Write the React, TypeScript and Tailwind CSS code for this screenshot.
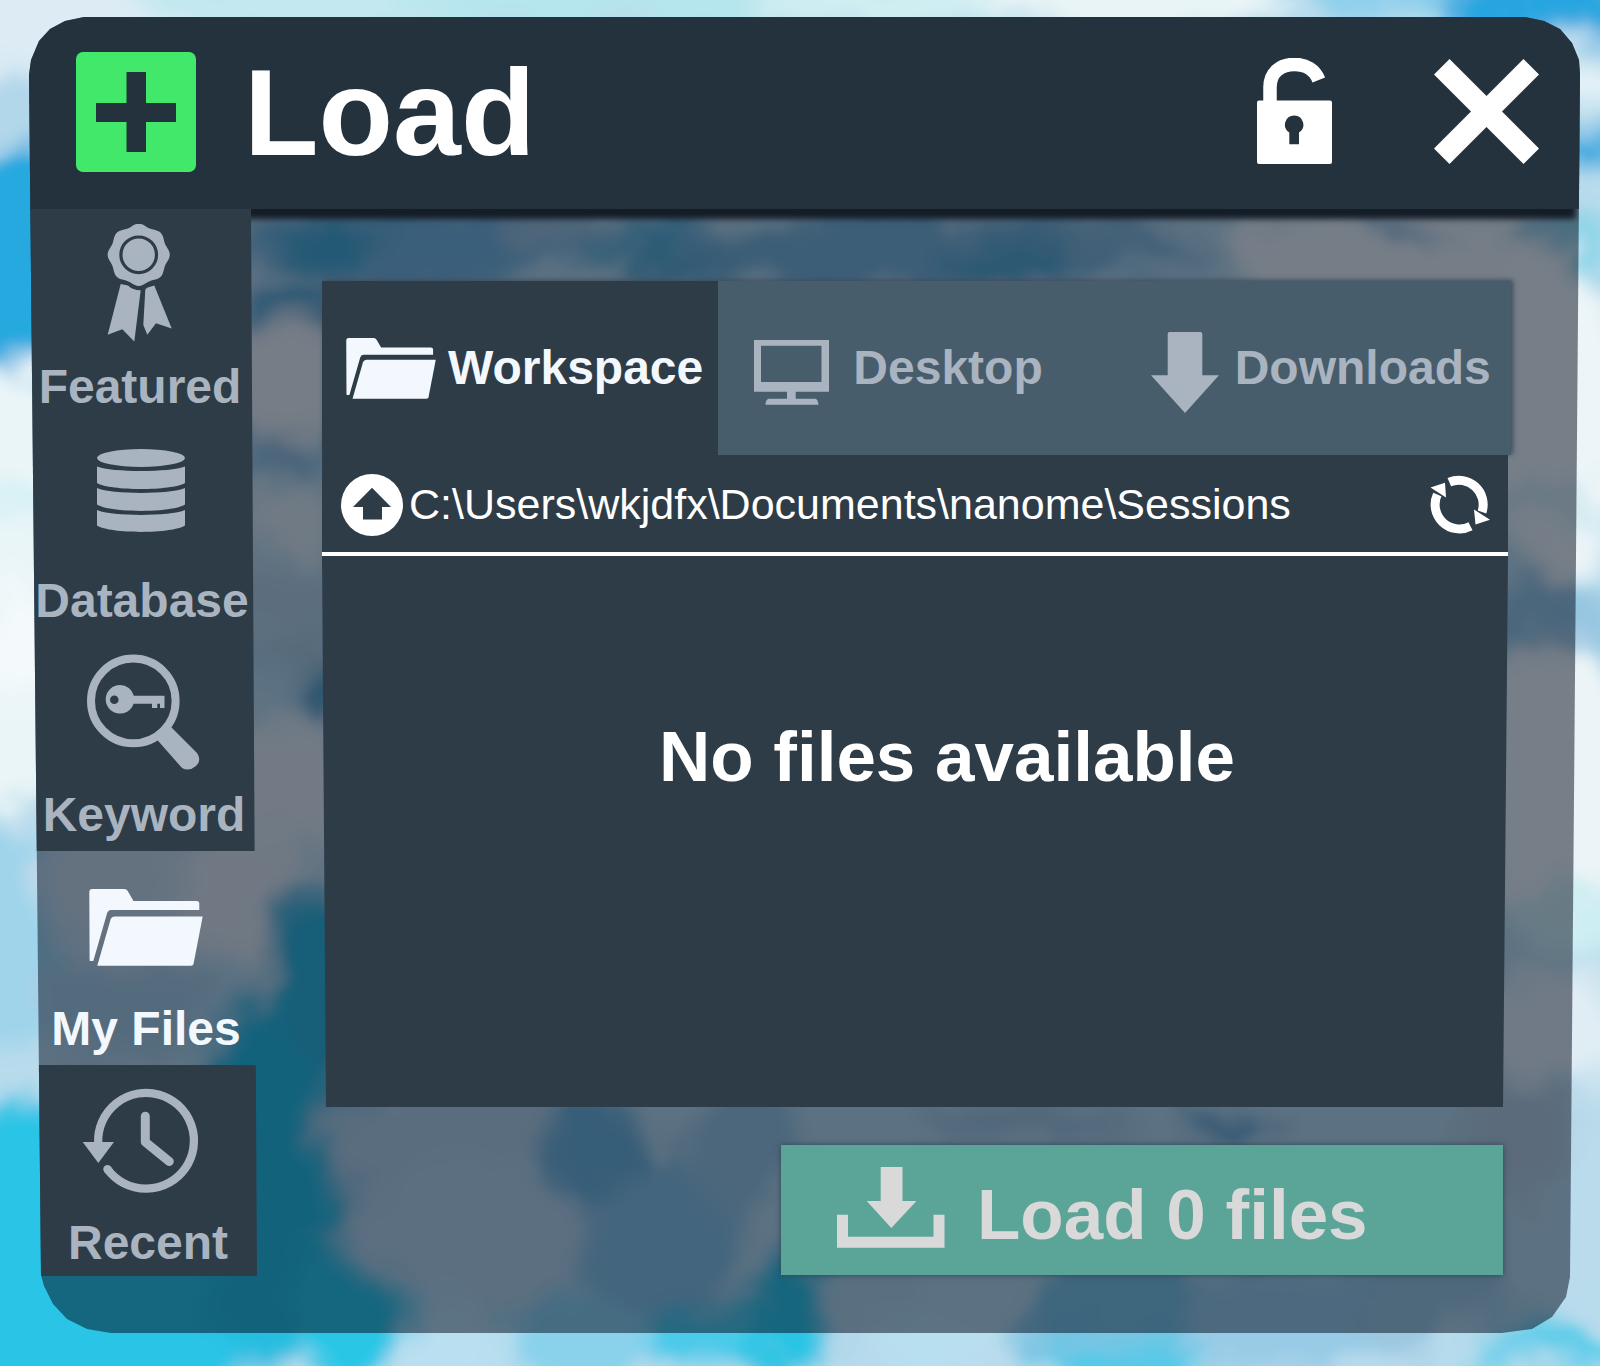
import React, { useState } from "react";

type Blob = [cx: number, cy: number, rx: number, ry: number, fill: string];

const softClouds: Blob[] = [
  // top edge
  [60, 20, 160, 90, "#dcebf4"],
  [330, 0, 200, 40, "#c3e8f0"],
  [600, 0, 200, 30, "#b5e5ed"],
  [900, 0, 150, 30, "#cfeef2"],
  [1150, 0, 170, 40, "#e8f4f6"],
  [1380, -5, 110, 26, "#8fd0ec"],
  [1540, 0, 100, 38, "#27a5e0"],
  [1575, 85, 60, 26, "#e3f2f7"],
  [1595, 150, 30, 22, "#2aa8e0"],
  // left edge
  [0, 270, 130, 118, "#27a9df"],
  [20, 110, 50, 36, "#b2d7ea"],
  [0, 590, 90, 220, "#eaf5f8"],
  [20, 640, 40, 60, "#f4fafb"],
  [20, 500, 40, 18, "#d6f1f4"],
  [0, 940, 90, 110, "#9fd4eb"],
  // behind the glass, upper band
  [420, 240, 190, 44, "#74b6dc"],
  [330, 250, 60, 20, "#3da8d0"],
  [560, 235, 60, 16, "#a8c8dc"],
  [720, 262, 90, 22, "#3aa5c8"],
  [640, 240, 70, 18, "#5fb4d8"],
  [930, 250, 260, 40, "#78b4d6"],
  [1010, 262, 60, 14, "#4aa6cc"],
  [1120, 240, 60, 18, "#8cbcd8"],
  [1400, 250, 180, 60, "#ebf3f6"],
  [1400, 225, 40, 10, "#6ab4d8"],
  [1555, 236, 44, 14, "#7cc6dc"],
  // left gutter
  [290, 310, 60, 26, "#4ca6cf"],
  [290, 380, 70, 60, "#ebf2f5"],
  [290, 452, 50, 10, "#5ea6cf"],
  [285, 520, 50, 40, "#dfecf2"],
  [280, 600, 60, 30, "#b8d4e2"],
  [290, 650, 50, 16, "#aacbdc"],
  [312, 690, 30, 20, "#4a9dc4"],
  [280, 790, 90, 70, "#e2edf2"],
  [150, 890, 110, 70, "#c9dce9"],
  [240, 890, 70, 60, "#dfe9ef"],
  [120, 1010, 90, 60, "#a9cfe4"],
  // right gutter
  [1550, 420, 90, 170, "#ecf5f8"],
  [1590, 240, 40, 14, "#7fd3e7"],
  [1550, 510, 80, 18, "#d2eaf1"],
  [1550, 780, 90, 150, "#ecf4f7"],
  [1550, 618, 100, 26, "#94c5e0"],
  [1580, 925, 60, 30, "#cdeef3"],
  [1550, 1030, 80, 60, "#e0edf4"],
  [1550, 1180, 90, 110, "#b9dbec"],
];

const lowClouds: Blob[] = [
  [40, 1270, 260, 170, "#29c4e6"],
  [300, 1050, 50, 140, "#2db4d8"],
  [270, 1180, 70, 200, "#28bde0"],
  [330, 980, 60, 80, "#2fb4d8"],
  [380, 1180, 50, 90, "#a6cce2"],
  [470, 1130, 150, 60, "#b4d2e4"],
  [480, 1230, 130, 80, "#b6d6e8"],
  [450, 1340, 60, 50, "#b9dff0"],
  [350, 1320, 60, 70, "#2cc6e6"],
  [600, 1150, 50, 60, "#6db4d8"],
  [660, 1250, 80, 90, "#86c2e2"],
  [580, 1340, 70, 50, "#8ad2ec"],
  [700, 1340, 60, 40, "#4ccbe9"],
  [740, 1140, 60, 70, "#98c6e0"],
  [790, 1320, 46, 60, "#2cc4e4"],
  [880, 1310, 60, 70, "#b4d8ea"],
  [930, 1350, 60, 40, "#b8dff0"],
  [1020, 1125, 110, 14, "#9cc4dc"],
  [1120, 1320, 110, 70, "#7cc4e2"],
  [1130, 1360, 90, 20, "#46cbea"],
  [1220, 1125, 50, 14, "#55a0cc"],
  [1300, 1320, 110, 60, "#98cbe6"],
  [1430, 1300, 80, 60, "#9cc8e0"],
  [1470, 1345, 34, 30, "#b8dcec"],
  [1520, 1130, 50, 60, "#b6cede"],
  [1560, 1350, 80, 24, "#5fcdea"],
];

function Sky() {
  return (
    <svg aria-hidden="true" className="absolute inset-0 h-full w-full" viewBox="0 0 1600 1366" preserveAspectRatio="none">
      <defs>
        <filter id="haze" x="-10%" y="-10%" width="120%" height="120%">
          <feTurbulence type="fractalNoise" baseFrequency="0.012" numOctaves="3" seed="4" result="noise" />
          <feGaussianBlur in="SourceGraphic" stdDeviation="12" result="soft" />
          <feDisplacementMap in="soft" in2="noise" scale="70" xChannelSelector="R" yChannelSelector="G" result="wisps" />
          <feGaussianBlur in="wisps" stdDeviation="3" />
        </filter>
      </defs>
      <rect width="1600" height="1366" fill="#b9dcec" />
      <g filter="url(#haze)">
        <rect x="-60" y="-60" width="1720" height="1486" fill="#b9dcec" />
        {[...softClouds, ...lowClouds].map(([cx, cy, rx, ry, fill], i) => (
          <ellipse key={i} cx={cx} cy={cy} rx={rx} ry={ry} fill={fill} />
        ))}
      </g>
    </svg>
  );
}

const BadgeIcon = () => {
  const rim = Array.from({ length: 96 }, (_, i) => {
    const t = (i / 96) * Math.PI * 2;
    const r = 29.8 + 1.3 * Math.cos(8 * t);
    return `${(56.7 + r * Math.cos(t)).toFixed(2)},${(30.8 + r * Math.sin(t)).toFixed(2)}`;
  }).join(" ");
  return (
    <svg viewBox="0 0 116 118" className="h-[118px] w-[116px]" fill="currentColor" aria-hidden="true">
      <polygon points={rim} />
      <circle cx="56.7" cy="30.8" r="17.8" fill="none" stroke="#2d3c47" strokeWidth="3.2" />
      <path d="M38.7 60 L46 61.5 Q51 66.5 58.7 66.3 L52.3 117.5 L40.3 105.3 L25.7 110.7 Z" />
      <path d="M63.3 65.5 L65 63.7 L72.3 61.5 L89.7 104.5 L74 99.3 L65.3 110.7 L61.3 101 Z" />
    </svg>
  );
};

const DatabaseIcon = () => (
  <svg viewBox="0 0 116 118" className="h-[118px] w-[116px]" fill="currentColor" aria-hidden="true">
    <ellipse cx="57" cy="20" rx="44" ry="9" />
    <path d="M13 28.5 C28 34.5 86 34.5 101 28.5 V45 C88 53 26 53 13 45 Z" />
    <path d="M13 50 C28 56.5 86 56.5 101 50 V66.5 C88 75 26 75 13 66.5 Z" />
    <path d="M13 72 C28 78.5 86 78.5 101 72 V87.5 C88 96 26 96 13 87.5 Z" />
  </svg>
);

const KeywordIcon = () => (
  <svg viewBox="0 0 116 118" className="h-[118px] w-[116px]" fill="currentColor" aria-hidden="true">
    <circle cx="47.3" cy="48.9" r="42.3" fill="none" stroke="currentColor" strokeWidth="8" />
    <path d="M70 86.5 Q80 82 84 74 L111 101 Q116 108 110 114 Q103 120 96 116 Z" />
    <path
      fillRule="evenodd"
      d="M34 33 A14.3 14.3 0 1 0 47.6 51.7 H66 V56 H71.3 V51.7 H74 V56 H78.5 V43.7 H47.9 A14.3 14.3 0 0 0 34 33 Z M28.3 43.4 A4.3 4.3 0 1 1 28.3 52 A4.3 4.3 0 1 1 28.3 43.4 Z"
    />
  </svg>
);

const folderShapes = (
  <>
    <path d="M1.3 26 Q1.3 23 4.3 23 H36 Q38.7 23 39.7 25 L45.5 35 H108.5 Q111.3 35 111.3 37.5 V44 H23 Q20 44 19 47.5 L5.3 95 H2 Q1.6 95 1.6 93 Z" />
    <path d="M27 50.5 H114.7 L105.5 98 Q105 99.8 103 99.8 H9.3 L22.5 53.7 Q23.5 50.5 27 50.5 Z" />
  </>
);

const FilesIcon = () => (
  <svg viewBox="0 0 116 118" className="h-[118px] w-[116px]" fill="currentColor" aria-hidden="true">
    {folderShapes}
  </svg>
);

const RecentIcon = () => (
  <svg viewBox="0 0 116 118" className="h-[118px] w-[116px] overflow-visible" fill="none" stroke="currentColor" strokeWidth="8.3" aria-hidden="true">
    <path d="M8.2 63 A47.9 47.9 0 1 1 17.5 89.2" />
    <circle cx="17.5" cy="89.2" r="4.2" fill="currentColor" stroke="none" />
    <path d="M55.3 36.3 V62 L79.3 81.5" strokeWidth="9" strokeLinecap="round" strokeLinejoin="round" />
    <path d="M-7.3 62 H24 L8.3 83 Z" fill="currentColor" stroke="none" />
  </svg>
);

const FolderIcon = () => (
  <svg viewBox="1 23 114 77" className="h-[61px] w-[90px] shrink-0" fill="currentColor" aria-hidden="true">
    {folderShapes}
  </svg>
);

const MonitorIcon = () => (
  <svg viewBox="0 0 75 65" className="mt-2 h-[65px] w-[75px] shrink-0" fill="currentColor" aria-hidden="true">
    <path fillRule="evenodd" d="M0 0 H75 V51.7 H41.7 V58.7 H61 Q64 58.7 64.5 64.7 H11.3 Q12 58.7 15 58.7 H33 V51.7 H0 Z M7 5.7 V42 H67.5 V5.7 Z" />
  </svg>
);

const DownArrowIcon = () => (
  <svg viewBox="0 0 68 81" className="mt-2 h-[81px] w-[68px] shrink-0" fill="currentColor" aria-hidden="true">
    <path d="M18.5 0 H49.5 Q51.3 0 51.3 2 V43.3 H68 L34 81 L0 43.3 H16.7 V2 Q16.7 0 18.5 0 Z" />
  </svg>
);

const navItems = [
  { label: "Featured", Icon: BadgeIcon },
  { label: "Database", Icon: DatabaseIcon },
  { label: "Keyword", Icon: KeywordIcon },
  { label: "My Files", Icon: FilesIcon },
  { label: "Recent", Icon: RecentIcon },
];

const tabs = [
  { label: "Workspace", Icon: FolderIcon, spacing: "gap-3 pl-6" },
  { label: "Desktop", Icon: MonitorIcon, spacing: "gap-6 pl-9" },
  { label: "Downloads", Icon: DownArrowIcon, spacing: "gap-4 pl-9" },
];

function Header() {
  return (
    <header className="relative flex h-48 items-center bg-[#23323d] pr-[41px] pb-[3px] pl-[47px] shadow-[0_14px_6px_-4px_#141c26]">
      <svg viewBox="0 0 120 120" className="h-[120px] w-[120px] shrink-0" aria-hidden="true">
        <rect width="120" height="120" rx="7" fill="#41e86a" />
        <path d="M50.5 20 H70 V51 H100 V70 H70 V100 H50.5 V70 H20 V51 H50.5 Z" fill="#23323d" />
      </svg>
      <h1 className="ml-12 flex-1 pt-0.5 text-[122px] leading-none font-bold text-white">Load</h1>
      <button type="button" aria-label="Unlock window" className="text-white">
        <svg viewBox="0 0 75 107" className="h-[107px] w-[75px]" aria-hidden="true">
          <path d="M13 44 V29 C13 14 24 6.4 37.5 6.4 C49 6.4 58 12 61.8 22" fill="none" stroke="currentColor" strokeWidth="13.5" />
          <path
            fill="currentColor"
            fillRule="evenodd"
            d="M2 42.5 H73 Q75 42.5 75 44.5 V104 Q75 106 73 106 H2 Q0 106 0 104 V44.5 Q0 42.5 2 42.5 Z M37.3 57.5 A9.2 9.2 0 0 0 32.3 74.5 V86.3 H42 V74.5 A9.2 9.2 0 0 0 37.3 57.5 Z"
          />
        </svg>
      </button>
      <button type="button" aria-label="Close" className="ml-[102px] text-white">
        <svg viewBox="0 0 105 105" className="h-[105px] w-[105px]" fill="currentColor" aria-hidden="true">
          <path d="M15.5 0 L52.5 37 L89.5 0 L105 15.5 L68 52.5 L105 89.5 L89.5 105 L52.5 68 L15.5 105 L0 89.5 L37 52.5 L0 15.5 Z" />
        </svg>
      </button>
    </header>
  );
}

function Sidebar() {
  const [active, setActive] = useState("My Files");
  return (
    <nav aria-label="Sources" className="relative w-[228px] shrink-0 [clip-path:polygon(0_0,222px_0,228px_1067px,9px_1067px)]">
      <ul>
        {navItems.map(({ label, Icon }, i) => (
          <li key={label} className="h-[214px] last:h-[211px]">
            <button
              type="button"
              onClick={() => setActive(label)}
              aria-current={active === label ? "page" : undefined}
              style={{ paddingLeft: i * 2 + 2, paddingRight: (navItems.length - 1 - i) * 2 }}
              className={
                "flex h-full w-full flex-col items-center pt-[15px] text-[48px] leading-[52px] font-bold whitespace-nowrap " +
                (active === label ? "text-[#f3f8fe]" : "bg-[#2d3c47] text-[#a9b4c0]")
              }
            >
              <Icon />
              <span className="mt-[19px]">{label}</span>
            </button>
          </li>
        ))}
      </ul>
    </nav>
  );
}

function Browser() {
  const [tab, setTab] = useState("Workspace");
  return (
    <section className="flex flex-col">
      <div role="tablist" aria-label="Locations" className="-mr-[3px] grid grid-cols-3 shadow-[2px_-1px_5px_#3b4c5a]">
        {tabs.map(({ label, Icon, spacing }) => (
          <button
            key={label}
            type="button"
            role="tab"
            aria-selected={tab === label}
            onClick={() => setTab(label)}
            className={
              "flex h-[174px] items-center text-[48px] leading-none font-bold " +
              spacing +
              (tab === label ? " bg-[#2d3c47] text-[#f3f8fe]" : " bg-[#485d6c] text-[#a9b4c0]")
            }
          >
            <Icon />
            {label}
          </button>
        ))}
      </div>
      <div className="relative flex h-[101px] items-center border-b-4 border-white bg-[#2d3c47] pt-0.5 pr-[18px] pl-[19px] text-white">
        <button type="button" aria-label="Parent folder">
          <svg viewBox="0 0 62 62" className="h-[62px] w-[62px]" aria-hidden="true">
            <circle cx="31" cy="31" r="31" fill="currentColor" />
            <path d="M31 13.7 L50 33 H41 V45.5 H22 V33 H12 Z" fill="#2d3c47" />
          </svg>
        </button>
        <p className="ml-1.5 flex-1 text-[43px] leading-none">C:\Users\wkjdfx\Documents\nanome\Sessions</p>
        <button type="button" aria-label="Refresh">
          <svg viewBox="0 0 60 60" className="h-[60px] w-[60px]" aria-hidden="true">
            <g fill="none" stroke="currentColor" strokeWidth="9">
              <path d="M19.3 7.2 A24.3 24.3 0 0 1 52 37" />
              <path d="M40.5 51.2 A24.3 24.3 0 0 1 7.3 19.5" />
            </g>
            <path d="M44 34.5 L60 44.7 L45.5 49.5 Z M0.5 12.5 L15 7.7 L16 22.5 Z" fill="currentColor" />
          </svg>
        </button>
      </div>
      <div className="h-[551px] bg-[#2d3c47] pt-[165px] pl-16 text-center [clip-path:polygon(0_0,100%_0,calc(100%_-_5px)_100%,4px_100%)]">
        <p className="text-[71px] leading-[72px] font-bold text-white">No files available</p>
      </div>
    </section>
  );
}

export default function App() {
  return (
    <div className="relative min-h-screen overflow-hidden pt-[17px] pr-5 pb-[33px] pl-[29px] font-['Liberation_Sans',Arial,sans-serif]">
      <Sky />
      <main className="relative bg-[#000818]/50 [clip-path:polygon(0_58px,2px_43px,10px_24px,21px_12px,36px_4px,55px_0,calc(100%_-_55px)_0,calc(100%_-_36px)_4px,calc(100%_-_20px)_12px,calc(100%_-_8px)_26px,calc(100%_-_1px)_43px,100%_58px,calc(100%_-_10px)_calc(100%_-_56px),calc(100%_-_14px)_calc(100%_-_36px),calc(100%_-_28px)_calc(100%_-_16px),calc(100%_-_48px)_calc(100%_-_4px),calc(100%_-_78px)_100%,82px_100%,58px_calc(100%_-_4px),38px_calc(100%_-_14px),24px_calc(100%_-_29px),15px_calc(100%_-_47px),12px_calc(100%_-_58px))]">
        <Header />
        <div className="flex">
          <Sidebar />
          <div className="flex min-w-0 flex-1 flex-col pt-[72px] pr-[72px] pb-[58px] pl-[65px]">
            <Browser />
            <button
              type="button"
              className="mt-[38px] mr-[5px] flex h-[130px] w-[722px] max-w-full items-center self-end bg-[#5ba598] pl-14 text-[71px] leading-none font-bold text-[#d9d9d9] shadow-[0_0_6px_#2c4656]"
            >
              <svg viewBox="0 0 108 81" className="mr-8 mb-1.5 h-[81px] w-[108px] shrink-0" fill="currentColor" aria-hidden="true">
                <path d="M43.7 0 H65.5 V34 H79.5 L54.3 61 L29.7 34 H43.7 Z" />
                <path d="M0 47.7 H11 V69.7 H96.5 V47.7 H107.5 V80.7 H0 Z" />
              </svg>
              <span className="pt-2">Load 0 files</span>
            </button>
          </div>
        </div>
      </main>
    </div>
  );
}
